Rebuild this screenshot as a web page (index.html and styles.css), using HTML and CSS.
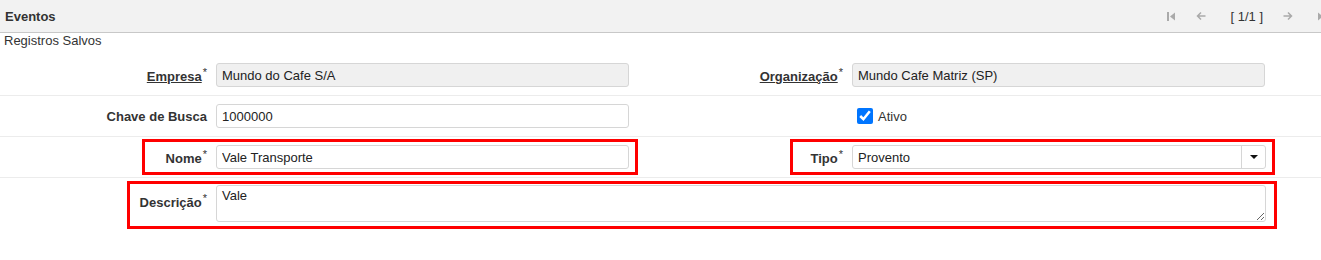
FILE: index.html
```html
<!DOCTYPE html>
<html lang="pt">
<head>
    <meta charset="UTF-8">
    <title>Eventos</title>
    <link rel="stylesheet" href="styles.css">
</head>
<body>
    <div class="header">
        <div class="title">Eventos</div>
        <div class="nav">
            <span class="nav-btn">
                <svg width="8" height="9" viewBox="0 0 8 9"><rect x="0" y="0" width="2" height="9" fill="#aaa"/><path d="M8 0.5L3 4.5L8 8.5Z" fill="#aaa"/></svg>
            </span>
            <span class="nav-btn">
                <svg width="10" height="10" viewBox="0 0 10 10"><path d="M9.5 5H1.5M5 1.5L1.5 5L5 8.5" stroke="#aaa" stroke-width="1.5" fill="none"/></svg>
            </span>
            <span class="nav-pos">[ 1/1 ]</span>
            <span class="nav-btn next">
                <svg width="10" height="10" viewBox="0 0 10 10"><path d="M0.5 5H8.5M5 1.5L8.5 5L5 8.5" stroke="#aaa" stroke-width="1.5" fill="none"/></svg>
            </span>
            <span class="nav-btn end">
                <svg width="8" height="9" viewBox="0 0 8 9"><path d="M0 0.5L5 4.5L0 8.5Z" fill="#aaa"/><rect x="6" y="0" width="2" height="9" fill="#aaa"/></svg>
            </span>
        </div>
    </div>
    <div class="status">Registros Salvos</div>

    <div class="form">
        <div class="row">
            <label class="lbl"><u>Empresa</u><sup>*</sup></label>
            <div class="field"><input class="inp ro" value="Mundo do Cafe S/A" readonly></div>
            <label class="lbl"><u>Organização</u><sup>*</sup></label>
            <div class="field"><input class="inp ro" value="Mundo Cafe Matriz (SP)" readonly></div>
        </div>
        <div class="row">
            <label class="lbl">Chave de Busca</label>
            <div class="field"><input class="inp" value="1000000"></div>
            <div></div>
            <div class="field check">
                <input type="checkbox" class="cb" checked>
                <span>Ativo</span>
            </div>
        </div>
        <div class="row">
            <label class="lbl">Nome<sup>*</sup></label>
            <div class="field"><input class="inp" value="Vale Transporte"></div>
            <label class="lbl">Tipo<sup>*</sup></label>
            <div class="field">
                <div class="select">
                    <span class="select-val">Provento</span>
                    <span class="select-btn"><span class="caret"></span></span>
                </div>
            </div>
        </div>
        <div class="row last">
            <label class="lbl top">Descrição<sup>*</sup></label>
            <div class="field wide"><textarea class="area">Vale</textarea></div>
        </div>

        <!-- marcações em vermelho -->
        <div class="mark mark-nome"></div>
        <div class="mark mark-tipo"></div>
        <div class="mark mark-desc"></div>
    </div>
</body>
</html>
```

FILE: styles.css
```css
body {
    margin: 0;
    min-height: 260px;
    font-family: "Liberation Sans", Arial, sans-serif;
    font-size: 13px;
    color: #333;
    background: #fff;
}
.header {
    height: 32px;
    background: #f2f2f2;
    border-bottom: 1px solid #c8c8c8;
    display: flex;
    align-items: center;
    justify-content: space-between;
    overflow: hidden;
}
.title {
    font-weight: bold;
    padding-left: 5px;
    color: #333;
}
.nav {
    display: flex;
    align-items: center;
    margin-right: -16px;
}
.nav-btn {
    width: 30px;
    display: flex;
    justify-content: center;
    align-items: center;
}
.nav-btn.next {
    margin-left: 10px;
}
.nav-btn.end {
    margin-left: 4px;
}
.nav-pos {
    margin-left: 14px;
    color: #333;
}
.status {
    line-height: 16px;
    padding-left: 4px;
    margin-bottom: 6px;
    color: #333;
}
.form {
    position: relative;
    padding-bottom: 30px;
}
.row {
    display: grid;
    grid-template-columns: 216px 421px 215px 414px;
    align-items: center;
    height: 40px;
    border-bottom: 1px solid #ececec;
}
.row.last {
    border-bottom: none;
    height: auto;
    align-items: start;
    padding-top: 7px;
}
.lbl {
    text-align: right;
    padding-right: 9px;
    font-weight: bold;
    color: #333;
}
.lbl.top {
    padding-top: 7px;
}
.lbl sup {
    font-size: 11px;
    font-weight: normal;
    margin-left: 1px;
    color: #333;
}
.field {
    display: flex;
    align-items: center;
}
.field.wide {
    grid-column: 2 / 5;
}
.inp {
    box-sizing: border-box;
    width: 413px;
    height: 24px;
    border: 1px solid #d6d6d6;
    border-radius: 3px;
    padding: 0 5px;
    font-family: inherit;
    font-size: 13px;
    color: #222;
    background: #fff;
    outline: none;
}
.inp.ro {
    background: #f0f0f0;
}
.check {
    padding-left: 5px;
    gap: 5px;
}
.cb {
    width: 16px;
    height: 16px;
    margin: 0;
    accent-color: #0075ff;
}
.select {
    box-sizing: border-box;
    width: 414px;
    height: 24px;
    border: 1px solid #d6d6d6;
    border-radius: 3px;
    display: flex;
    align-items: center;
    color: #222;
}
.select-val {
    flex: 1;
    padding-left: 5px;
}
.select-btn {
    width: 23px;
    height: 22px;
    border-left: 1px solid #d6d6d6;
    display: flex;
    justify-content: center;
    align-items: center;
}
.caret {
    width: 0;
    height: 0;
    border-left: 4px solid transparent;
    border-right: 4px solid transparent;
    border-top: 4px solid #111;
}
.area {
    box-sizing: border-box;
    width: 1050px;
    height: 37px;
    border: 1px solid #d6d6d6;
    border-radius: 3px;
    padding: 2px 5px;
    font-family: inherit;
    font-size: 13px;
    color: #222;
    outline: none;
}
.mark {
    position: absolute;
    border: 3px solid #ff0000;
    box-sizing: border-box;
}
.mark-nome {
    left: 142px;
    top: 84px;
    width: 496px;
    height: 36px;
}
.mark-tipo {
    left: 790px;
    top: 84px;
    width: 485px;
    height: 36px;
}
.mark-desc {
    left: 127px;
    top: 126px;
    width: 1150px;
    height: 48px;
}
```
